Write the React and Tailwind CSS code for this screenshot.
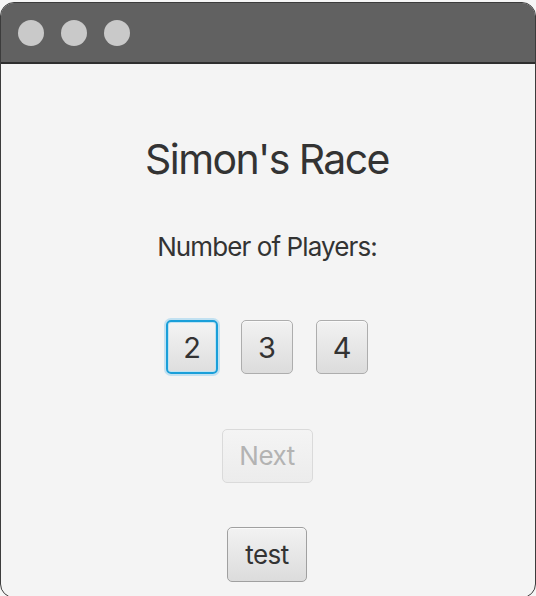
export default function App() {
  const font = { fontFamily: 'Inter, "Noto Sans", sans-serif' };
  return (
    <div className="w-[536px] h-[596px] overflow-hidden bg-[#f6f6f6]" style={font}>
      <div className="pt-[2px]">
        <div className="h-[596px] rounded-[14px] border border-[#3c3c3c] overflow-hidden flex flex-col bg-[#f4f4f4]">
          {/* title bar */}
          <div className="h-[61px] shrink-0 bg-[#616161] border-b-2 border-[#2e2e2e] flex items-center gap-[17px] pl-[17px]">
            <span className="w-[26px] h-[26px] rounded-full bg-[#c9c9c9]" />
            <span className="w-[26px] h-[26px] rounded-full bg-[#c9c9c9]" />
            <span className="w-[26px] h-[26px] rounded-full bg-[#c9c9c9]" />
          </div>

          <div className="flex flex-col items-center pr-[2px]">
            <h1 className="mt-[75px] text-[41px] leading-[41px] text-[#333333] tracking-[-1.6px]">
              Simon's Race
            </h1>
            <p className="mt-[54px] text-[26px] leading-[26px] text-[#333333] tracking-[-0.9px]">
              Number of Players:
            </p>

            <div className="mt-[60px] flex gap-[23px]">
              <button className="w-[52px] h-[54px] rounded-[5px] border-2 border-[#1a9fd9] shadow-[0_0_0_2px_rgba(100,190,235,0.35),inset_0_0_0_1px_#bfe3f3] bg-gradient-to-b from-[#f4f4f4] to-[#dedede] text-[29px] leading-none text-[#333333]">
                2
              </button>
              <button className="w-[52px] h-[54px] rounded-[5px] border border-[#adadad] shadow-[inset_0_1px_0_#fafafa] bg-gradient-to-b from-[#f2f2f2] to-[#dcdcdc] text-[29px] leading-none text-[#333333]">
                3
              </button>
              <button className="w-[52px] h-[54px] rounded-[5px] border border-[#adadad] shadow-[inset_0_1px_0_#fafafa] bg-gradient-to-b from-[#f2f2f2] to-[#dcdcdc] text-[29px] leading-none text-[#333333]">
                4
              </button>
            </div>

            <button className="mt-[55px] w-[91px] h-[54px] rounded-[5px] border border-[#dadada] bg-gradient-to-b from-[#f4f4f4] to-[#ececec] text-[26px] leading-none tracking-[-0.5px] text-[#b3b3b3]">
              Next
            </button>

            <button className="mt-[44px] w-[80px] h-[55px] rounded-[5px] border border-[#a0a0a0] shadow-[inset_0_1px_0_#fafafa] bg-gradient-to-b from-[#f2f2f2] to-[#dcdcdc] text-[26px] leading-none tracking-[-0.5px] text-[#333333]">
              test
            </button>
          </div>
        </div>
      </div>
    </div>
  );
}
